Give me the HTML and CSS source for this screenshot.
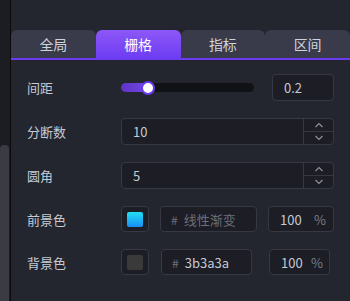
FILE: index.html
```html
<!DOCTYPE html>
<html>
<head>
    <link rel="stylesheet" href="styles.css">
</head>
<body>
    <div class="rail">
        <div class="thumb"></div>
    </div>
    <div class="panel">
        <div class="tabs">
            <div class="tab">全局</div>
            <div class="tab active">栅格</div>
            <div class="tab">指标</div>
            <div class="tab">区间</div>
        </div>

        <div class="form">
            <div class="row">
                <label>间距</label>
                <div class="slider">
                    <div class="fill" style="width: 27px"></div>
                    <div class="knob" style="left: 27px"></div>
                </div>
                <div class="box small">0.2</div>
            </div>

            <div class="row">
                <label>分断数</label>
                <div class="box num">
                    <span class="val">10</span>
                    <div class="spin">
                        <span class="up"><svg width="10" height="6" viewBox="0 0 10 6"><path d="M1.5 5L5 1.5L8.5 5" fill="none" stroke="#8c919c" stroke-width="1.2"/></svg></span>
                        <span class="down"><svg width="10" height="6" viewBox="0 0 10 6"><path d="M1.5 1L5 4.5L8.5 1" fill="none" stroke="#8c919c" stroke-width="1.2"/></svg></span>
                    </div>
                </div>
            </div>

            <div class="row">
                <label>圆角</label>
                <div class="box num">
                    <span class="val">5</span>
                    <div class="spin">
                        <span class="up"><svg width="10" height="6" viewBox="0 0 10 6"><path d="M1.5 5L5 1.5L8.5 5" fill="none" stroke="#8c919c" stroke-width="1.2"/></svg></span>
                        <span class="down"><svg width="10" height="6" viewBox="0 0 10 6"><path d="M1.5 1L5 4.5L8.5 1" fill="none" stroke="#8c919c" stroke-width="1.2"/></svg></span>
                    </div>
                </div>
            </div>

            <div class="row">
                <label>前景色</label>
                <div class="swatch"><span class="chip fg"></span></div>
                <div class="box hex"><span class="hash">#</span><span class="hint">线性渐变</span></div>
                <div class="box pct"><span>100</span><span class="unit">%</span></div>
            </div>

            <div class="row tight">
                <label>背景色</label>
                <div class="swatch"><span class="chip bg"></span></div>
                <div class="box hex"><span class="hash">#</span><span>3b3a3a</span></div>
                <div class="box pct"><span>100</span><span class="unit">%</span></div>
            </div>
        </div>
    </div>
</body>
</html>
```

FILE: styles.css
```css
body {
    margin: 0;
    height: 301px;
    display: flex;
    background-color: #1c1d23;
    font-family: "Noto Sans CJK SC", "Noto Sans", sans-serif;
    font-size: 13px;
    color: #c5cad4;
    overflow: hidden;
}
.rail {
    width: 10px;
    border-right: 1px solid #0b0b0e;
    display: flex;
    flex-direction: column;
    justify-content: flex-end;
}
.thumb {
    width: 9px;
    height: 156px;
    background-color: #3a3b43;
    border-radius: 4px 4px 0 0;
}
.panel {
    flex: 1;
    background-color: #23252f;
    padding-top: 30px;
}
.tabs {
    display: flex;
    height: 28px;
    border-bottom: 2px solid #6a3bf0;
}
.tab {
    flex: 1;
    display: flex;
    align-items: center;
    justify-content: center;
    background-color: #393a4a;
    border-radius: 6px 6px 0 0;
    font-size: 14px;
    color: #cfd3dd;
}
.tab.active {
    background: linear-gradient(180deg, #8d57f7, #6d3df2);
    color: #ffffff;
}
.form {
    padding: 14px 16px 0 16px;
    display: flex;
    flex-direction: column;
    gap: 17px;
}
.row {
    display: flex;
    align-items: center;
    height: 27px;
}
.row label {
    width: 94px;
    flex-shrink: 0;
}
.box {
    height: 100%;
    box-sizing: border-box;
    background-color: #1c1d25;
    border: 1px solid #363844;
    border-radius: 4px;
    display: flex;
    align-items: center;
    padding-left: 11px;
}
.slider {
    position: relative;
    width: 133px;
    height: 9px;
    border-radius: 5px;
    background-color: #111216;
    margin-right: 18px;
}
.fill {
    height: 100%;
    border-radius: 5px 0 0 5px;
    background: linear-gradient(90deg, #5d34c4, #7347e8);
}
.knob {
    position: absolute;
    top: 50%;
    width: 10px;
    height: 10px;
    margin: -7px 0 0 -7px;
    border: 2px solid #6a3bf0;
    border-radius: 50%;
    background-color: #ffffff;
}
.box.small {
    width: 62px;
}
.box.num {
    flex: 1;
    padding-right: 0;
}
.num .val {
    flex: 1;
}
.spin {
    width: 29px;
    height: 100%;
    border-left: 1px solid #363844;
    display: flex;
    flex-direction: column;
}
.spin span {
    flex: 1;
    display: flex;
    align-items: center;
    justify-content: center;
}
.spin .up {
    border-bottom: 1px solid #363844;
}
.row:nth-child(n+4) {
    height: 26px;
}
.swatch {
    width: 28px;
    height: 100%;
    box-sizing: border-box;
    background-color: #1c1d25;
    border: 1px solid #363844;
    border-radius: 4px;
    display: flex;
    align-items: center;
    justify-content: center;
    margin-right: 11px;
}
.chip {
    width: 16px;
    height: 15px;
    border-radius: 2px;
}
.chip.fg {
    background: linear-gradient(180deg, #20e0f4, #1a8df5);
}
.chip.bg {
    background-color: #3b3a3a;
}
.box.hex {
    flex: 1;
    gap: 6px;
    padding-left: 10px;
}
.hash {
    color: #6d717c;
    font-size: 12px;
}
.hint {
    color: #6b6f7a;
}
.box.pct {
    width: 66px;
    margin-left: 11px;
    justify-content: space-between;
    padding-right: 7px;
}
.unit {
    color: #7a7e89;
}
.row.tight {
    padding-right: 4px;
}
.tight .swatch {
    margin-right: 12px;
}
.tight .box.pct {
    width: 61px;
    margin-left: 17px;
    padding-right: 6px;
}
```
